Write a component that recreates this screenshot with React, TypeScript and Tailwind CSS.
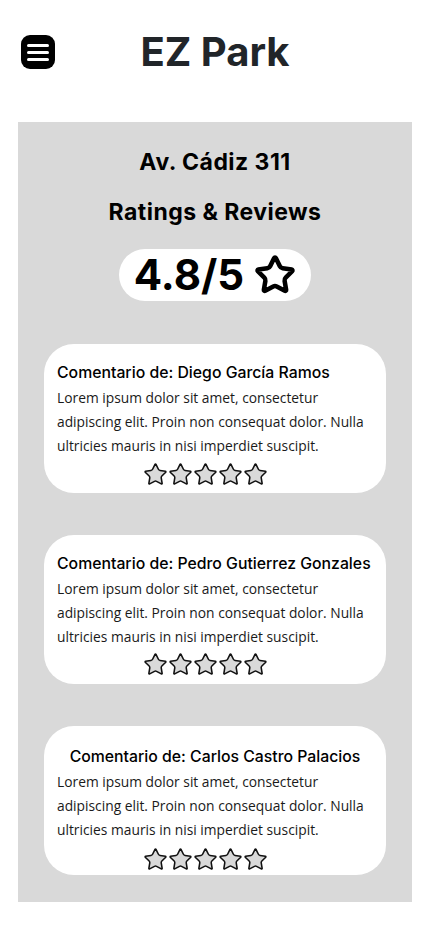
import { Star } from "lucide-react";

const reviews = [
  { name: "Diego García Ramos", align: "text-left", pad: "pt-[16px]", gap: "mt-[4px]" },
  { name: "Pedro Gutierrez Gonzales", align: "text-left", pad: "pt-[16px]", gap: "mt-[3px]" },
  { name: "Carlos Castro Palacios", align: "text-center", pad: "pt-[18px]", gap: "mt-[5px]" },
];

function Stars() {
  return (
    <div className="flex pl-[86px]">
      {[0, 1, 2, 3, 4].map((i) => (
        <Star key={i} size={25} strokeWidth={1.5} fill="#d9d9d9" color="#111" />
      ))}
    </div>
  );
}

function ReviewCard({ name, align, pad, gap }: { name: string; align: string; pad: string; gap: string }) {
  return (
    <div className={`bg-white rounded-[30px] h-[149px] px-[13px] ${pad}`}>
      <p className={`${align} font-['Inter',sans-serif] font-medium text-[15.8px] leading-[26px] text-black whitespace-nowrap`}>
        Comentario de: {name}
      </p>
      <p className="font-['Open_Sans',sans-serif] text-[13.8px] leading-[24px] text-[#1a1a1a] whitespace-nowrap">
        Lorem ipsum dolor sit amet, consectetur
        <br />
        adipiscing elit. Proin non consequat dolor. Nulla
        <br />
        ultricies mauris in nisi imperdiet suscipit.
      </p>
      <div className={gap}>
        <Stars />
      </div>
    </div>
  );
}

export default function App() {
  return (
    <div className="min-h-screen bg-white">
      <header className="flex items-center px-[21px] pt-[32px]">
        <div className="w-[34px] h-[34px] rounded-[9px] bg-black flex flex-col justify-center items-center gap-[4px]">
          <span className="block w-[22px] h-[3px] rounded-full bg-white" />
          <span className="block w-[22px] h-[3px] rounded-full bg-white" />
          <span className="block w-[22px] h-[3px] rounded-full bg-white" />
        </div>
        <h1 className="flex-1 text-center font-['Inter',sans-serif] font-bold text-[40px] leading-[40px] text-[#212529]">
          EZ Park
        </h1>
        <div className="w-[34px]" />
      </header>

      <main className="mx-[18px] mt-[50px] bg-[#d9d9d9] pt-[26px] pb-[27px] px-[26px]">
        <h2 className="text-center font-['Inter',sans-serif] font-bold text-[23px] tracking-[0.02em] leading-[28px] text-black">
          Av. Cádiz 311
        </h2>
        <h2 className="mt-[22px] text-center font-['Inter',sans-serif] font-bold text-[23px] tracking-[0.02em] leading-[28px] text-black">
          Ratings &amp; Reviews
        </h2>
        <div className="mt-[23px] flex justify-center">
          <div className="w-[192px] h-[52px] bg-white rounded-full flex items-center justify-center gap-[10px]">
            <span className="font-['Inter',sans-serif] font-bold text-[42px] leading-none text-black">4.8/5</span>
            <Star size={42} strokeWidth={2.6} color="#000" />
          </div>
        </div>
        <div className="mt-[43px] flex flex-col gap-[42px]">
          {reviews.map((r) => (
            <ReviewCard key={r.name} {...r} />
          ))}
        </div>
      </main>
    </div>
  );
}
